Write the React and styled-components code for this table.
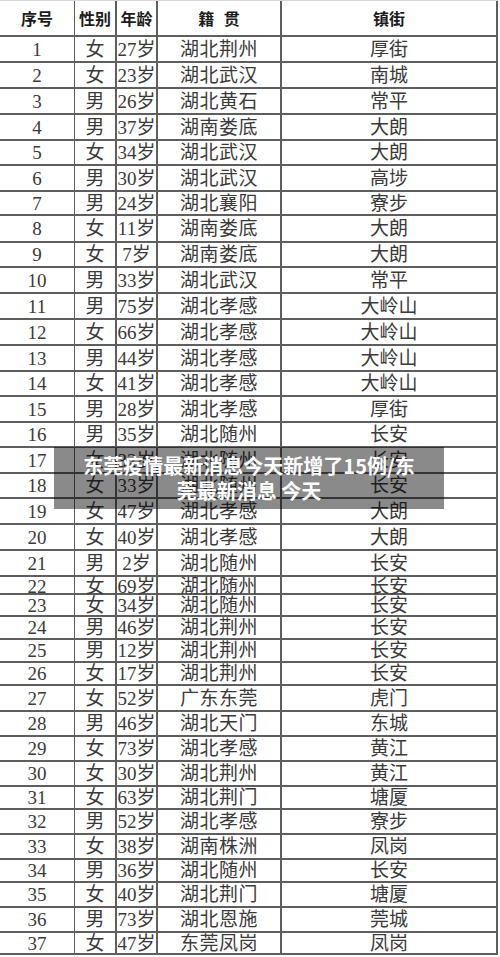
import React from 'react';
import styled, { createGlobalStyle } from 'styled-components';

const GlobalStyle = createGlobalStyle`
  * { box-sizing: border-box; }
  body {
    margin: 0;
    background: #ffffff;
    font-family: "Liberation Serif", "Noto Sans CJK SC", serif;
  }
`

const Page = styled.div`
  position: relative;
  width: 500px;
  height: 957px;
  overflow: hidden;
  background: #fff;
`

const Table = styled.div`
  width: 498px;
  border-top: 1px solid #d8d8d8;
`

const Row = styled.div`
  display: grid;
  grid-template-columns: 75px 42px 41px 124px 216px;
  height: ${p => p.$h}px;
  border-bottom: 2px solid #5e5e5e;
`

const Cell = styled.div`
  display: flex;
  align-items: center;
  justify-content: center;
  border-right: 2px solid #5e5e5e;
  color: #3a3a3a;
  font-size: 19px;
  line-height: 1;
  white-space: nowrap;
  overflow: visible;
  letter-spacing: ${p => p.$spacing || 0}px;
  &:first-child { border-right-width: 1.5px; }
`

const HeadCell = styled(Cell)`
  font-family: "Noto Sans CJK SC", sans-serif;
  font-weight: 700;
  font-size: 16px;
  color: #1c1c1c;
  word-spacing: 6px;
`

const Caption = styled.div`
  position: absolute;
  left: 54px;
  top: 447px;
  width: 390px;
  height: 62px;
  padding-top: 6px;
  background: rgba(0, 0, 0, 0.46);
  color: #fff;
  font-family: "Noto Sans CJK SC", sans-serif;
  font-weight: 700;
  font-size: 20px;
  line-height: 25px;
  text-align: center;
`

const rows = [
  [1, '女', '27岁', '湖北荆州', '厚街', 26],
  [2, '女', '23岁', '湖北武汉', '南城', 26],
  [3, '男', '26岁', '湖北黄石', '常平', 26],
  [4, '男', '37岁', '湖南娄底', '大朗', 26],
  [5, '女', '34岁', '湖北武汉', '大朗', 25],
  [6, '男', '30岁', '湖北武汉', '高埗', 26],
  [7, '男', '24岁', '湖北襄阳', '寮步', 24],
  [8, '女', '11岁', '湖南娄底', '大朗', 27],
  [9, '女', '7岁', '湖南娄底', '大朗', 25],
  [10, '男', '33岁', '湖北武汉', '常平', 26],
  [11, '男', '75岁', '湖北孝感', '大岭山', 26],
  [12, '女', '66岁', '湖北孝感', '大岭山', 26],
  [13, '男', '44岁', '湖北孝感', '大岭山', 26],
  [14, '女', '41岁', '湖北孝感', '大岭山', 25],
  [15, '男', '28岁', '湖北孝感', '厚街', 26],
  [16, '男', '35岁', '湖北随州', '长安', 25],
  [17, '女', '32岁', '湖北随州', '长安', 26],
  [18, '女', '33岁', '湖北随州', '长安', 25],
  [19, '女', '47岁', '湖北孝感', '大朗', 26],
  [20, '女', '40岁', '湖北孝感', '大朗', 26],
  [21, '男', '2岁', '湖北随州', '长安', 26],
  [22, '女', '69岁', '湖北随州', '长安', 18],
  [23, '女', '34岁', '湖北随州', '长安', 22],
  [24, '男', '46岁', '湖北荆州', '长安', 23],
  [25, '男', '12岁', '湖北荆州', '长安', 23],
  [26, '女', '17岁', '湖北荆州', '长安', 23],
  [27, '女', '52岁', '广东东莞', '虎门', 26],
  [28, '男', '46岁', '湖北天门', '东城', 25],
  [29, '女', '73岁', '湖北孝感', '黄江', 25],
  [30, '女', '30岁', '湖北荆州', '黄江', 25],
  [31, '女', '63岁', '湖北荆门', '塘厦', 23],
  [32, '男', '52岁', '湖北孝感', '寮步', 25],
  [33, '女', '38岁', '湖南株洲', '凤岗', 25],
  [34, '男', '36岁', '湖北随州', '长安', 23],
  [35, '女', '40岁', '湖北荆门', '塘厦', 25],
  [36, '男', '73岁', '湖北恩施', '莞城', 25],
  [37, '女', '47岁', '东莞凤岗', '凤岗', 22],
]

const App = () => {
  return (
    <Page>
      <GlobalStyle />
      <Table>
        <Row $h={36}>
          <HeadCell>序号</HeadCell>
          <HeadCell>性别</HeadCell>
          <HeadCell>年龄</HeadCell>
          <HeadCell>籍 贯</HeadCell>
          <HeadCell>镇街</HeadCell>
        </Row>
        {rows.map(([no, sex, age, origin, town, h]) => (
          <Row key={no} $h={h}>
            <Cell>{no}</Cell>
            <Cell>{sex}</Cell>
            <Cell>{age}</Cell>
            <Cell $spacing={0.5}>{origin}</Cell>
            <Cell>{town}</Cell>
          </Row>
        ))}
      </Table>
      <Caption>
        东莞疫情最新消息今天新增了15例/东<br />莞最新消息 今天
      </Caption>
    </Page>
  );
};

export default App;
